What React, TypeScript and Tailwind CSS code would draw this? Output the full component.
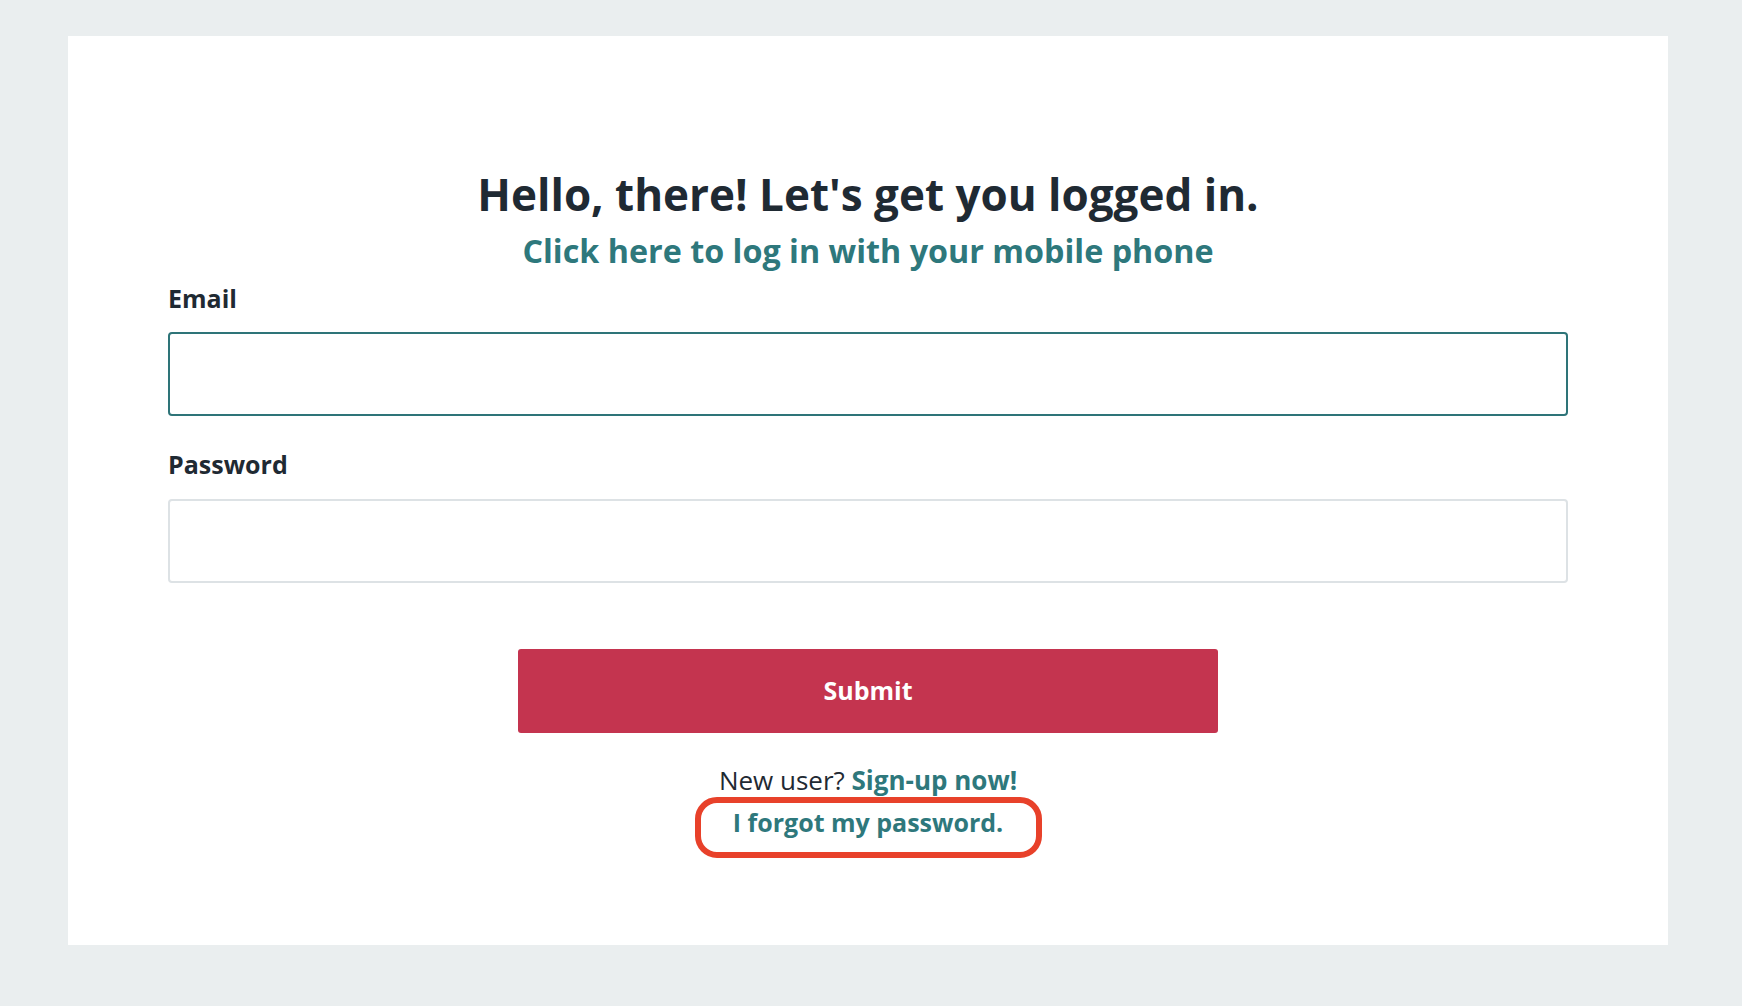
export default function App() {
  return (
    <div
      className="min-h-[1006px] w-full bg-[#eaeeef] pt-[36px]"
      style={{ fontFamily: "'Open Sans', Lato, sans-serif" }}
    >
      <div className="ml-[68px] h-[909px] w-[1600px] bg-white px-[100px] pt-[132px]">
        <h1 className="text-center text-[44px] font-bold leading-[52px] text-[#1f2a33]">
          Hello, there! Let's get you logged in.
        </h1>
        <div className="mt-[6px] text-center leading-[48px]">
          <a href="#" className="text-[32.3px] font-bold leading-[48px] text-[#2e787c]">
            Click here to log in with your mobile phone
          </a>
        </div>

        <form onSubmit={(e) => e.preventDefault()}>
          <label className="mt-[1px] block text-[25px] font-bold leading-[32px] text-[#1f2a33]">
            Email
          </label>
          <input
            type="email"
            className="mt-[18px] block h-[84px] w-full rounded-[4px] border-2 border-[#2e7478] px-4 text-[22px] outline-none"
          />

          <label className="mt-[32px] block text-[25px] font-bold leading-[32px] text-[#1f2a33]">
            Password
          </label>
          <input
            type="password"
            className="mt-[19px] block h-[84px] w-full rounded-[4px] border-2 border-[#dde2e5] px-4 text-[22px] outline-none"
          />

          <div className="mt-[66px] flex justify-center">
            <button
              type="submit"
              className="h-[84px] w-[700px] rounded-[3px] bg-[#c4344f] text-[25px] font-bold text-white"
            >
              Submit
            </button>
          </div>
        </form>

        <p className="mt-[31px] text-center text-[26px] leading-[32px] text-[#1f2a33]">
          New user?{" "}
          <a href="#" className="font-bold text-[#2e787c]">
            Sign-up now!
          </a>
        </p>
        {/* highlighted link */}
        <div className="mt-px flex justify-center">
          <div className="flex h-[61px] w-[347px] items-start justify-center rounded-[22px] border-[6px] border-[#e8412a] pt-[3px]">
            <a href="#" className="text-[25px] font-bold leading-[32px] text-[#2e787c]">
              I forgot my password.
            </a>
          </div>
        </div>
      </div>
    </div>
  );
}
